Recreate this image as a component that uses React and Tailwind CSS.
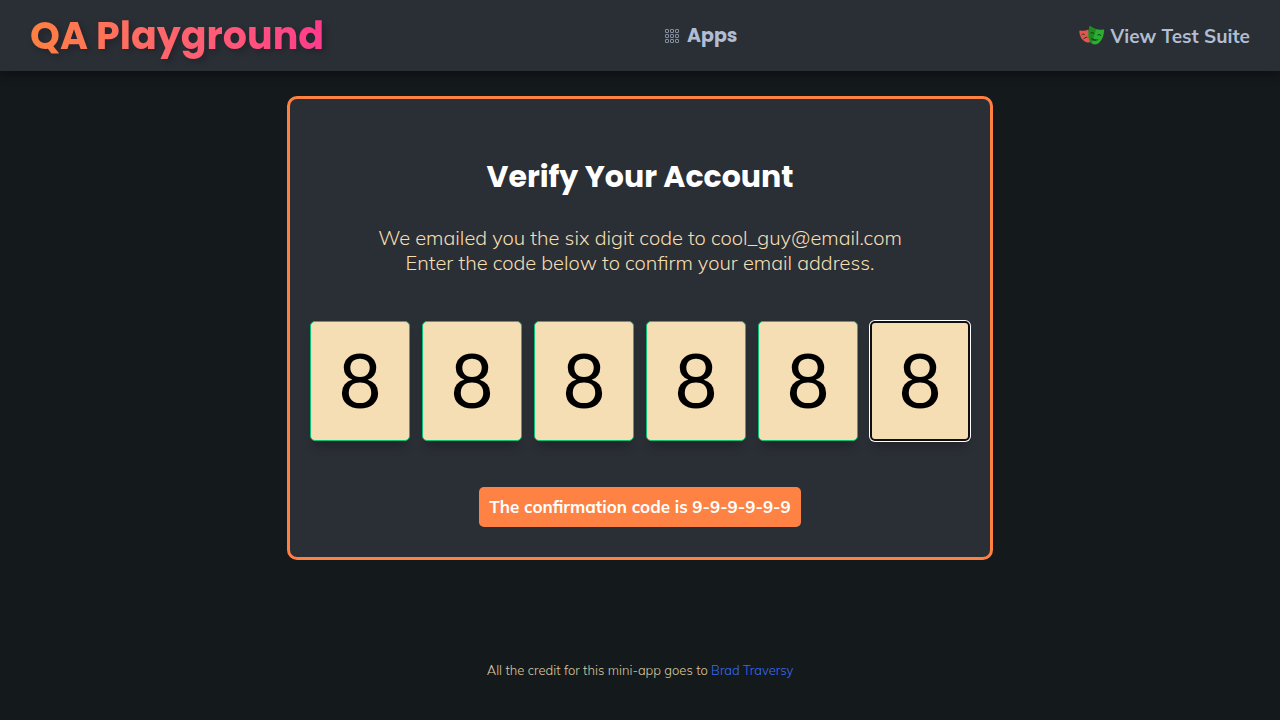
import { useState } from "react";

function GridIcon() {
  const cells = [0, 5, 10];
  return (
    <svg viewBox="0 0 14 14" className="size-[14px] shrink-0 opacity-75" aria-hidden="true">
      {cells.map((y) =>
        cells.map((x) => (
          <rect
            key={`${x}-${y}`}
            x={x + 0.5}
            y={y + 0.5}
            width="3"
            height="3"
            rx="0.4"
            fill="none"
            stroke="currentColor"
            strokeWidth="0.9"
          />
        ))
      )}
    </svg>
  );
}

function MasksIcon() {
  return (
    <svg viewBox="0 0 26 20" className="h-5 w-[26px] shrink-0" aria-hidden="true">
      <path
        fill="#e2574c"
        d="M.3 5.2c0-.6.5-.8 1-.7 2.8.7 5.600.3 8-.9l2.500 12c-1 .9-2.200 1.100-3.400.8C3.700 15.500.6 10.900.3 5.200z"
      />
      <path fill="none" stroke="#2b2f38" strokeWidth="1" strokeLinecap="round" d="M2.800 8.700c.6-.8 1.700-1 2.500-.4M4.600 12.900c.8-1.100 2-1.700 3.400-1.700" />
      <path fill="#2ead33" d="M10.500.9c.1-.7.7-.9 1.300-.5 3.600 2.700 7.700 3.700 12.300 3.100.8-.1 1.200.3 1.100 1-.7 8.500-4.600 14-9.700 13.900-5.200-.2-7.300-8.200-5-17.500z" />
      <path fill="#1d8d22" d="M10.500.9c.1-.7.7-.9 1.300-.5 1.700 1.300 3.500 2.200 5.400 2.700L13 17.500C9.100 15.300 8.500 8.500 10.500.9z" />
      <path
        fill="none"
        stroke="#174f20"
        strokeWidth="1.200"
        strokeLinecap="round"
        d="M12 7c.8-.8 1.900-.6 2.500.4M19 9c.9-.8 2-.6 2.500.4"
      />
      <path fill="#174f20" d="M11.400 11.600c2.500 1.400 5.300 2 8.400 1.700-1.200 1.500-3.200 2-5.100 1.500-1.700-.5-3-1.600-3.300-3.200z" />
    </svg>
  );
}

function Header() {
  return (
    <header className="flex items-center justify-between bg-[#2a2e35] px-[30px] pt-[6px] pb-[5px] text-[19px] leading-[30px] font-bold text-[#b0bdd2] shadow-[0_5px_10px_rgba(0,0,0,0.3)]">
      <a
        href="#home"
        className="whitespace-nowrap bg-linear-to-r from-[#ff8040] to-[#ff3a8c] bg-clip-text font-['Poppins','Inter',sans-serif] text-[38px] leading-[60px] text-transparent drop-shadow-[3px_3px_3px_rgba(0,0,0,0.2)]"
      >
        QA Playground
      </a>
      <a href="#apps" className="flex items-center gap-2 font-['Poppins','Inter',sans-serif]">
        <GridIcon />
        Apps
      </a>
      <a href="#tests" className="flex items-center gap-[6px] whitespace-nowrap">
        <MasksIcon />
        View Test Suite
      </a>
    </header>
  );
}

function CodeInput({ index, value, selected, onChange, onSelect }) {
  return (
    <input
      type="text"
      inputMode="numeric"
      maxLength={1}
      aria-label={`Digit ${index + 1}`}
      value={value}
      onChange={(event) => onChange(event.target.value)}
      onFocus={onSelect}
      className={`h-[120px] w-[100px] min-w-0 rounded-[5px] bg-[#f5deb3] pb-[5px] text-center font-['Lato',sans-serif] text-[75px] text-black shadow-[0_10px_10px_-5px_rgba(0,0,0,0.25)] outline-none ${
        selected ? "border-2 border-[#101010] ring-1 ring-white" : "border border-[#0fbf75]"
      }`}
    />
  );
}

export default function App() {
  const [digits, setDigits] = useState(["8", "8", "8", "8", "8", "8"]);
  const [selected, setSelected] = useState(5);

  const update = (index, value) =>
    setDigits(digits.map((digit, i) => (i === index ? value : digit)));

  return (
    <div className="flex min-h-screen flex-col bg-[#14191c] font-['Mulish','Open_Sans',sans-serif]">
      <Header />
      <main className="flex flex-col items-center px-4 pt-[25px]">
        <section className="flex w-full max-w-[706px] flex-col items-center rounded-[10px] border-3 border-[#ff8040] bg-[#2a2e35] px-5 pt-[55px] pb-[30px] text-center">
          <h1 className="font-['Poppins','Inter',sans-serif] text-[30px] leading-[46px] font-bold text-white">
            Verify Your Account
          </h1>
          <p className="mt-[25px] text-[20px] leading-[25px] font-light text-[#f5deb3]">
            We emailed you the six digit code to cool_guy@email.com
            <br />
            Enter the code below to confirm your email address.
          </p>
          <div className="mt-[46px] flex w-full justify-between gap-2">
            {digits.map((digit, index) => (
              <CodeInput
                key={index}
                index={index}
                value={digit}
                selected={selected === index}
                onChange={(value) => update(index, value)}
                onSelect={() => setSelected(index)}
              />
            ))}
          </div>
          <small className="mt-[46px] rounded-[5px] bg-[#fd8244] p-[10px] text-[17px] leading-5 font-bold text-white">
            The confirmation code is 9-9-9-9-9-9
          </small>
        </section>
      </main>
      <footer className="mt-[100px] px-4 text-center text-[13px] leading-5 font-light text-[#dcc89f]">
        All the credit for this mini-app goes to{" "}
        <a href="#brad" className="text-[#3b6bef]">
          Brad Traversy
        </a>
      </footer>
    </div>
  );
}
